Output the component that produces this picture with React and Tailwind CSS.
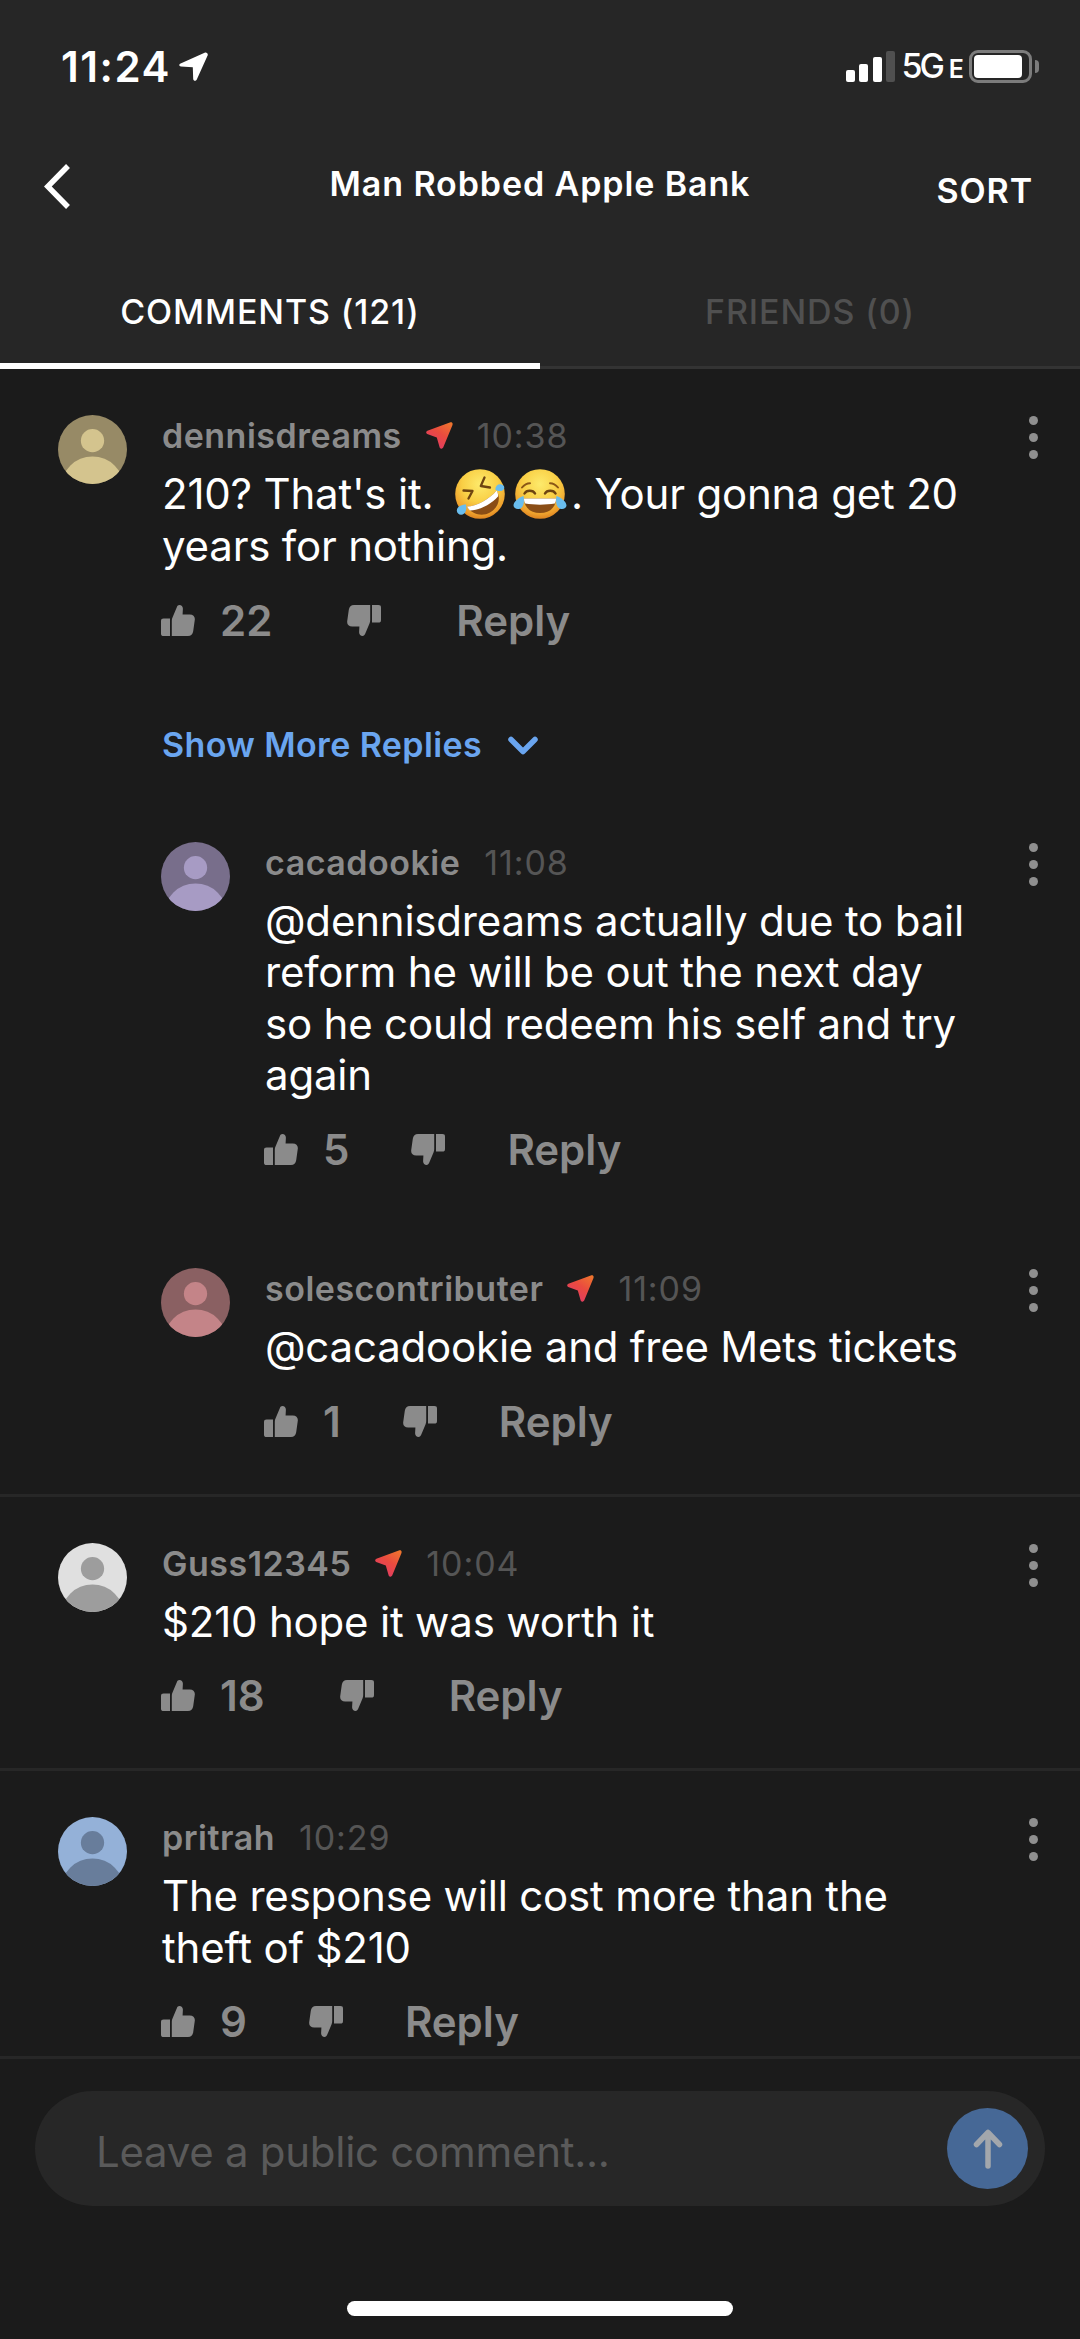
// Icons
import { useId } from 'react';

// Comment thread
const comments = [
  {
    id: 1,
    user: "dennisdreams",
    nearby: true,
    time: "10:38",
    lines: [["210? That's it. ", "rofl", "joy", ". Your gonna get 20"], ["years for nothing."]],
    likes: 22,
    avatar: { bg: "#978a66", fg: "#d4c48e" },
    replies: [
      {
        id: 2,
        user: "cacadookie",
        time: "11:08",
        lines: [
          ["@dennisdreams actually due to bail"],
          ["reform he will be out the next day"],
          ["so he could redeem his self and try"],
          ["again"],
        ],
        likes: 5,
        avatar: { bg: "#786e8b", fg: "#a79bc4" },
      },
      {
        id: 3,
        user: "solescontributer",
        nearby: true,
        time: "11:09",
        lines: [["@cacadookie and free Mets tickets"]],
        likes: 1,
        avatar: { bg: "#8a6062", fg: "#c48488" },
      },
    ],
  },
  {
    id: 4,
    user: "Guss12345",
    nearby: true,
    time: "10:04",
    lines: [["$210 hope it was worth it"]],
    likes: 18,
    avatar: { bg: "#e0e0e0", fg: "#9d9d9d" },
  },
  {
    id: 5,
    user: "pritrah",
    time: "10:29",
    lines: [["The response will cost more than the"], ["theft of $210"]],
    likes: 9,
    avatar: { bg: "#94b1d8", fg: "#687d9b" },
  },
];

const ArrowIcon = ({ className }) => (
  <svg viewBox="0 0 29 29" className={className} fill="currentColor" aria-hidden="true">
    <path d="M25.6.7 1.6 11.4C-.4 12.4 0 14.4 2 14.5L13.8 15.2 14.2 27C14.4 29.2 16.9 29.4 17.8 27.5L28.6 3.6C29.4 1.6 27.6-.2 25.6.7Z" />
  </svg>
);

const NearbyIcon = () => {
  const id = useId();
  return (
    <svg viewBox="0 0 27 27" className="w-[27px] h-[27px] shrink-0" aria-hidden="true">
      <defs>
        <linearGradient id={id} x1="1" y1="0" x2="0.3" y2="1">
          <stop offset="0" stopColor="#ef7a2c" />
          <stop offset="0.5" stopColor="#ea4b3f" />
          <stop offset="1" stopColor="#e03a68" />
        </linearGradient>
      </defs>
      <path
        d="M23.8.6 1.4 8.8C-.2 9.6-.2 11.4 1.2 12L10.8 15.6 13.6 25.2C14.2 27 16.4 27.2 17.2 25.6L26.4 3.2C27.2 1.2 25.8-.2 23.8.6Z"
        fill={`url(#${id})`}
      />
    </svg>
  );
};

const ThumbIcon = ({ down }) => (
  <svg viewBox="0 0 34 31" className={`w-[34px] h-[31px] shrink-0 ${down ? "rotate-180" : ""}`} fill="currentColor" aria-hidden="true">
    <path d="M2.6 13.5H9V31H2.6C.8 31 0 30.2 0 28.4V16.1C0 14.3.8 13.5 2.6 13.5Z" />
    <path d="M10.8 15.8C10.8 14.6 11 13.8 11.5 12.6L15.7 2.4C16.3.8 17.2 0 18.4 0 20.4 0 21.9 1.6 21.9 3.8L21.6 9.4H28.8C32.2 9.4 34.2 11.6 33.8 14.8L32.2 26.2C31.7 29.4 30 31 27 31H10.8Z" />
  </svg>
);

// Emoji
const Face = ({ label, className, children }) => {
  const id = useId();
  return (
    <svg viewBox="0 0 54 52" role="img" aria-label={label} className={`inline-block w-[54px] h-[52px] align-[-11px] ${className}`}>
      <defs>
        <radialGradient id={id} cx="0.5" cy="0.3" r="0.72">
          <stop offset="0" stopColor="#fdea6c" />
          <stop offset="0.5" stopColor="#f9cf45" />
          <stop offset="0.85" stopColor="#ee9f2c" />
          <stop offset="1" stopColor="#d97c1e" />
        </radialGradient>
      </defs>
      <circle cx="27" cy="26" r="24.8" fill={`url(#${id})`} />
      {children}
    </svg>
  );
};

const Rofl = () => (
  <Face label="🤣" className="ml-[8px] mr-[6px]">
    <path d="M10.5 22.5 19.5 23 15.5 30.5M31.5 9.5 27.8 18 37 19.5" fill="none" stroke="#6e4410" strokeWidth="2.3" strokeLinecap="round" strokeLinejoin="round" />
    <path d="M14 38.5C23 38.5 37 31 43.5 22.5 48.5 31 45 40 37 44.5 29 49 19 46.5 14 38.5Z" fill="#8a4d15" />
    <path d="M14 38.5C23 38.5 37 31 43.5 22.5 45 25 45.3 26.5 45 28.5 38 36.5 27 42 17 42.5 15.8 41.5 14.8 40 14 38.5Z" fill="#fff" />
    <path d="M13 36.5C8 36.5 4 39 3.8 42.500 3.8 46.500 8.500 48 11.2 45.5 13.5 43.500 13.5 40 13 36.5ZM42.3 21.5C42.5 17.500 45.5 15.800 48.500 16.5 52 17.3 52 21 49.500 22.500 47.5 23.700 44.5 23 42.3 21.5Z" fill="#69bdee" />
  </Face>
);

const Joy = () => (
  <Face label="😂" className="mr-[4px]">
    <path d="M9 19.5C11 17 13.5 15.2 17 15.2M45 19.5C43 17 40.5 15.2 37 15.2" fill="none" stroke="#8a5716" strokeWidth="2" strokeLinecap="round" />
    <path d="M11.5 25.5C13.5 21.8 20 21.8 22 25.5M32 25.5C34 21.8 40.5 21.8 42.5 25.5" fill="none" stroke="#6e4410" strokeWidth="2.5" strokeLinecap="round" />
    <path d="M11 30.5H43C43 39.5 36.5 45 27 45S11 39.5 11 30.5Z" fill="#8a4d15" />
    <path d="M11 30.5H43C43 33 42.5 34.4 41.8 35.5 33 37 21 37 12.2 35.5 11.5 34.4 11 33 11 30.5Z" fill="#fff" />
    <path d="M10.5 28C5 30 .5 34 .5 37.500 .8 41.5 7 42.500 9.5 38.500 11.2 36 11.2 31 10.5 28ZM43.5 28C49 30 53.500 34 53.500 37.500 53.2 41.5 47 42.500 44.5 38.500 42.8 36 42.8 31 43.5 28Z" fill="#69bdee" />
  </Face>
);

const Avatar = ({ colors }) => (
  <svg viewBox="0 0 70 70" className="w-[69px] h-[69px] shrink-0 rounded-full" aria-hidden="true">
    <rect width="70" height="70" fill={colors.bg} />
    <circle cx="35" cy="26" r="11.8" fill={colors.fg} />
    <circle cx="35" cy="74" r="32" fill={colors.fg} />
  </svg>
);

const CommentItem = ({ comment, reply }) => {
  const gap = comment.likes > 9 ? "gap-[75px]" : "gap-[62px]";

  return (
    <article className={`flex gap-[35px] pr-[41px] ${reply ? "pl-[161px]" : "pl-[58px]"}`}>
      <Avatar colors={comment.avatar} />
      <div className="flex-1 min-w-0">
        {/* Name and time */}
        <div className="flex items-center h-[41px] text-[34px] leading-[41px]">
          <span className="font-semibold tracking-[0.5px] text-[#8b8b8b]">{comment.user}</span>
          {comment.nearby && <span className="ml-[24px] flex"><NearbyIcon /></span>}
          <span className="ml-[24px] tracking-[0.9px] text-[#555555]">{comment.time}</span>
        </div>

        {/* Body */}
        <p className="mt-[12px] text-[42px] leading-[51.6px] tracking-[-0.2px] text-white whitespace-pre">
          {comment.lines.map((line, i) => (
            <span key={i} className="block">
              {line.map((part, j) => {
                if (part === "rofl") return <Rofl key={j} />;
                if (part === "joy") return <Joy key={j} />;
                return <span key={j}>{part}</span>;
              })}
            </span>
          ))}
        </p>

        {/* Actions */}
        <div className={`mt-[23px] -ml-px flex items-center h-[51px] text-[42px] leading-[51px] font-semibold text-[#8b8b8b] ${gap}`}>
          <button className="flex items-center gap-[25px]"><ThumbIcon />{comment.likes}</button>
          <button><ThumbIcon down /></button>
          <button>Reply</button>
        </div>
      </div>

      {/* Menu */}
      <button className="flex flex-col gap-2 w-[10px] h-[46px] mt-px shrink-0">
        <span className="size-[9px] rounded-full bg-[#8f8f8f]" />
        <span className="size-[9px] rounded-full bg-[#8f8f8f]" />
        <span className="size-[9px] rounded-full bg-[#8f8f8f]" />
      </button>
    </article>
  );
};

const StatusBar = () => (
  <div className="flex items-center justify-between h-[134px] pl-[61px] pr-[41px] text-white">
    <div className="flex items-center gap-[8px] mt-[-2px]">
      <span className="text-[42px] leading-[51px] font-semibold tracking-[1.5px]">11:24</span>
      <ArrowIcon className="w-[29px] h-[29px]" />
    </div>
    <div className="flex items-end h-[33px] mt-[-1px]">
      <div className="flex items-end gap-[4.5px] mb-px">
        <span className="w-[9px] h-[12px] rounded-[2px] bg-white" />
        <span className="w-[9px] h-[18px] rounded-[2px] bg-white" />
        <span className="w-[9px] h-[25px] rounded-[2px] bg-white" />
        <span className="w-[9px] h-[31px] rounded-[2px] bg-[#505050]" />
      </div>
      <span className="ml-[6px] text-[34px] leading-[34px] font-medium tracking-[-3px]">5G</span>
      <span className="ml-[7px] text-[25px] leading-[28px] font-semibold">E</span>
      <div className="ml-[5px] w-[63px] h-[33px] rounded-[9px] border-[3px] border-[#7c7c7c] p-[2px]">
        <div className="w-[48px] h-full rounded-[4px] bg-white" />
      </div>
      <span className="ml-[3px] mb-[10px] w-[4px] h-[13px] rounded-r-full bg-[#7c7c7c]" />
    </div>
  </div>
);

const App = () => {
  return (
    <div className="flex flex-col w-[1080px] h-[2339px] overflow-hidden bg-[#1b1b1b] font-['Inter',sans-serif]">
      {/* Header */}
      <header className="bg-[#262626] text-white h-[369px] shrink-0">
        <StatusBar />
        <div className="grid grid-cols-[1fr_auto_1fr] h-[106px] pl-[44px] pr-[47px]">
          <button className="mt-[30px] h-[45px]">
            <svg viewBox="0 0 26 45" className="w-[26px] h-[45px]" fill="none" stroke="currentColor" strokeWidth="5.5" aria-label="Back">
              <path d="M24 2 3.8 22.5 24 43" />
            </svg>
          </button>
          <h1 className="mt-[29px] ml-[3px] text-[34px] leading-[41px] font-semibold tracking-[0.9px]">Man Robbed Apple Bank</h1>
          <button className="mt-[36px] h-[41px] justify-self-end text-[34px] leading-[41px] font-semibold tracking-[0.9px]">SORT</button>
        </div>

        {/* Tabs */}
        <div className="grid grid-cols-2 h-[129px] text-[34px] leading-[41px] font-medium tracking-[0.9px]">
          <button className="flex justify-center items-start pt-[51px] h-[129px] border-b-[6px] border-white">
            COMMENTS (121)
          </button>
          <button className="flex justify-center items-start pt-[51px] h-[129px] border-b-[3px] border-[#333333] text-[#505050]">
            FRIENDS (0)
          </button>
        </div>
      </header>

      {/* Comments */}
      <main className="flex-1 min-h-0 overflow-hidden">
        {comments.map(comment => (
          <section key={comment.id} className="pt-[46px] pb-[47px] border-b-[3px] border-[#272727]">
            <CommentItem comment={comment} />
            {comment.replies && (
              <div className="flex flex-col gap-[93px]">
                <button className="mt-[78px] mb-[-16px] ml-[162px] flex items-center gap-[26px] h-[41px] text-[34px] leading-[41px] font-semibold tracking-[0.4px] text-[#6aa5ef]">
                  Show More Replies
                  <svg viewBox="0 0 30 20" className="w-[30px] h-[20px] mt-1" fill="none" stroke="currentColor" strokeWidth="5.5" strokeLinecap="round" strokeLinejoin="round" aria-hidden="true">
                    <path d="M3 3.5 15 15.5 27 3.5" />
                  </svg>
                </button>
                {comment.replies.map(item => <CommentItem key={item.id} comment={item} reply />)}
              </div>
            )}
          </section>
        ))}
      </main>

      {/* Composer */}
      <footer className="shrink-0 h-[283px] border-t-[3px] border-[#272727] px-[35px] pt-[32px]">
        <div className="flex items-center justify-between h-[115px] rounded-full bg-[#272727] pl-[61px] pr-[17px]">
          <span className="mt-[5px] text-[42px] leading-[51px] tracking-[-0.28px] text-[#5a5a5a]">Leave a public comment...</span>
          <button className="flex items-center justify-center size-[81px] rounded-full bg-[#466896]">
            <svg viewBox="0 0 30 40" className="w-[30px] h-[40px]" fill="none" stroke="#a3a7ac" strokeWidth="5.5" strokeLinecap="round" strokeLinejoin="round" aria-label="Send">
              <path d="M15 37V4M3.5 15.5 15 3.5 26.5 15.5" />
            </svg>
          </button>
        </div>
        <div className="mx-auto mt-[95px] w-[386px] h-[15px] rounded-full bg-white" />
      </footer>
    </div>
  );
};

export default App;
